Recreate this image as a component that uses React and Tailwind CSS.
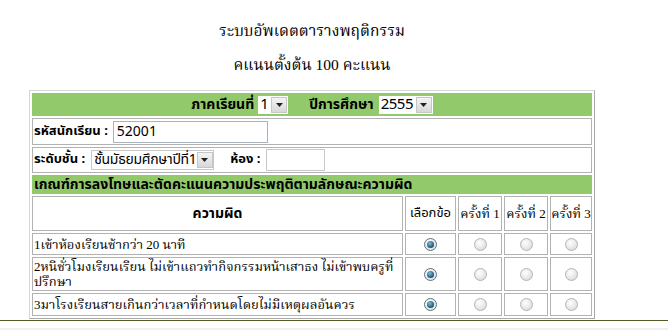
import React from "react";

const sans = "font-['Tahoma','Noto_Sans_Thai','Loma','Garuda','DejaVu_Sans',sans-serif]";
const serif = "font-['Times_New_Roman','Liberation_Serif','Noto_Serif_Thai','Norasi','Noto_Sans_Thai',serif]";

function Radio({ checked }) {
  return (
    <span
      className={
        "inline-flex w-[13px] h-[13px] rounded-full border items-center justify-center " +
        (checked
          ? "border-[#5a7384] bg-[radial-gradient(circle_at_40%_35%,#ffffff,#d8d8d8)]"
          : "border-[#b4b4b4] bg-[radial-gradient(circle_at_40%_35%,#ffffff,#d4d4d4)]")
      }
    >
      {checked && (
        <span className="w-[7px] h-[7px] rounded-full bg-[radial-gradient(circle_at_40%_35%,#7fc0dc,#124b6a_75%)]" />
      )}
    </span>
  );
}

function DropBtn() {
  return (
    <span className="shrink-0 w-[16px] h-[16px] flex items-center justify-center border border-[#c6c6c6] bg-gradient-to-b from-[#f4f4f4] to-[#d8d8d8]">
      <svg width="7" height="4" viewBox="0 0 7 4">
        <polygon points="0,0 7,0 3.5,4" fill="#222" />
      </svg>
    </span>
  );
}

function Select({ value, w, t = "text-[14px]" }) {
  return (
    <span className={"inline-flex items-center justify-between bg-white h-[18px] pl-[2px] pr-[1px] " + w}>
      <span className={"leading-[18px] text-black whitespace-nowrap " + t + " " + sans}>{value}</span>
      <DropBtn />
    </span>
  );
}

const cell = "border border-[#b2b2b2] bg-white";
const green = "border border-[#92c96a] bg-[#92c96a]";

export default function App() {
  const rows = [
    { text: "1เข้าห้องเรียนช้ากว่า 20 นาที", h: "h-[22px]" },
    { text: "2หนีชั่วโมงเรียนเรียน ไม่เข้าแถวทำกิจกรรมหน้าเสาธง ไม่เข้าพบครูที่ปรึกษา", h: "h-[34px]" },
    { text: "3มาโรงเรียนสายเกินกว่าเวลาที่กำหนดโดยไม่มีเหตุผลอันควร", h: "h-[23px]" },
  ];
  return (
    <div className="w-[668px] h-[330px] bg-white overflow-hidden flex flex-col">
      <div className={"w-[566px] ml-[29px] flex flex-col items-center pt-[20px] gap-[12px] text-[15.5px] leading-[22px] text-black " + serif}>
        <div>ระบบอัพเดตตารางพฤติกรรม</div>
        <div>คแนนตั้งต้น 100 คะแนน</div>
      </div>
      <div className="ml-[29px] mt-[14px] w-[566px] border border-[#d6d6d6] border-r-[#a8a8a8] border-b-[#a8a8a8] p-[2px] grid grid-cols-[371px_51px_44px_44px_42px] gap-[2px]">
        <div className={"col-span-5 h-[23px] flex items-center justify-center " + green}>
          <span className={"font-bold text-[14px] text-black mr-[4px] " + sans}>ภาคเรียนที่</span>
          <Select value="1" w="w-[30px]" t="text-[15px]" />
          <span className={"font-bold text-[14px] text-black ml-[21px] mr-[5px] " + sans}>ปีการศึกษา</span>
          <Select value="2555" w="w-[54px]" t="text-[15px] tracking-[-0.5px]" />
        </div>
        <div className={"col-span-5 h-[27px] flex items-center pl-[1px] " + cell}>
          <span className={"font-bold text-[13px] text-black mr-[5px] " + sans}>รหัสนักเรียน :</span>
          <span className="w-[155px] h-[22px] border border-[#a9b2ba] bg-white flex items-center pl-[3px]">
            <span className={"text-[14px] text-black " + sans}>52001</span>
          </span>
        </div>
        <div className={"col-span-5 h-[26px] flex items-center pl-[1px] " + cell}>
          <span className={"font-bold text-[13px] text-black mr-[6px] " + sans}>ระดับชั้น :</span>
          <span className="border border-[#c8c8c8] inline-flex">
            <Select value="ชั้นมัธยมศึกษาปีที่1" w="w-[121px]" t="text-[14px] tracking-[-0.3px]" />
          </span>
          <span className={"font-bold text-[13px] text-black ml-[16px] mr-[6px] " + sans}>ห้อง :</span>
          <span className="w-[59px] h-[22px] border border-[#c8c8c8] bg-white" />
        </div>
        <div className={"col-span-5 h-[19px] flex items-center pl-[1px] " + green}>
          <span className={"font-bold text-[14px] leading-none text-black whitespace-nowrap " + sans}>
            เกณฑ์การลงโทษและตัดคะแนนความประพฤติตามลักษณะความผิด
          </span>
        </div>

        <div className={"h-[35px] flex items-center justify-center " + cell}>
          <span className={"font-bold text-[14px] text-black " + sans}>ความผิด</span>
        </div>
        <div className={"h-[35px] flex items-center justify-center " + cell}>
          <span className={"text-[13px] text-black " + sans}>เลือกข้อ</span>
        </div>
        {["ครั้งที่ 1", "ครั้งที่ 2", "ครั้งที่ 3"].map((t) => (
          <div key={t} className={"h-[35px] flex items-center justify-center " + cell}>
            <span className={"text-[13px] text-black whitespace-nowrap " + serif}>{t}</span>
          </div>
        ))}

        {rows.map((r, i) => (
          <React.Fragment key={i}>
            <div className={r.h + " flex items-center pl-[1px] " + cell}>
              <span className={"text-[13px] leading-[15px] text-black " + serif}>{r.text}</span>
            </div>
            <div className={r.h + " flex items-center justify-center " + cell}>
              <Radio checked />
            </div>
            <div className={r.h + " flex items-center justify-center " + cell}>
              <Radio />
            </div>
            <div className={r.h + " flex items-center justify-center " + cell}>
              <Radio />
            </div>
            <div className={r.h + " flex items-center justify-center " + cell}>
              <Radio />
            </div>
          </React.Fragment>
        ))}
      </div>
      <div className="mt-[1px] h-[2px] w-full bg-[#4f5d24]" />
      <div className="mt-[7px] h-[10px] w-full bg-[#f1f1f1]" />
    </div>
  );
}
